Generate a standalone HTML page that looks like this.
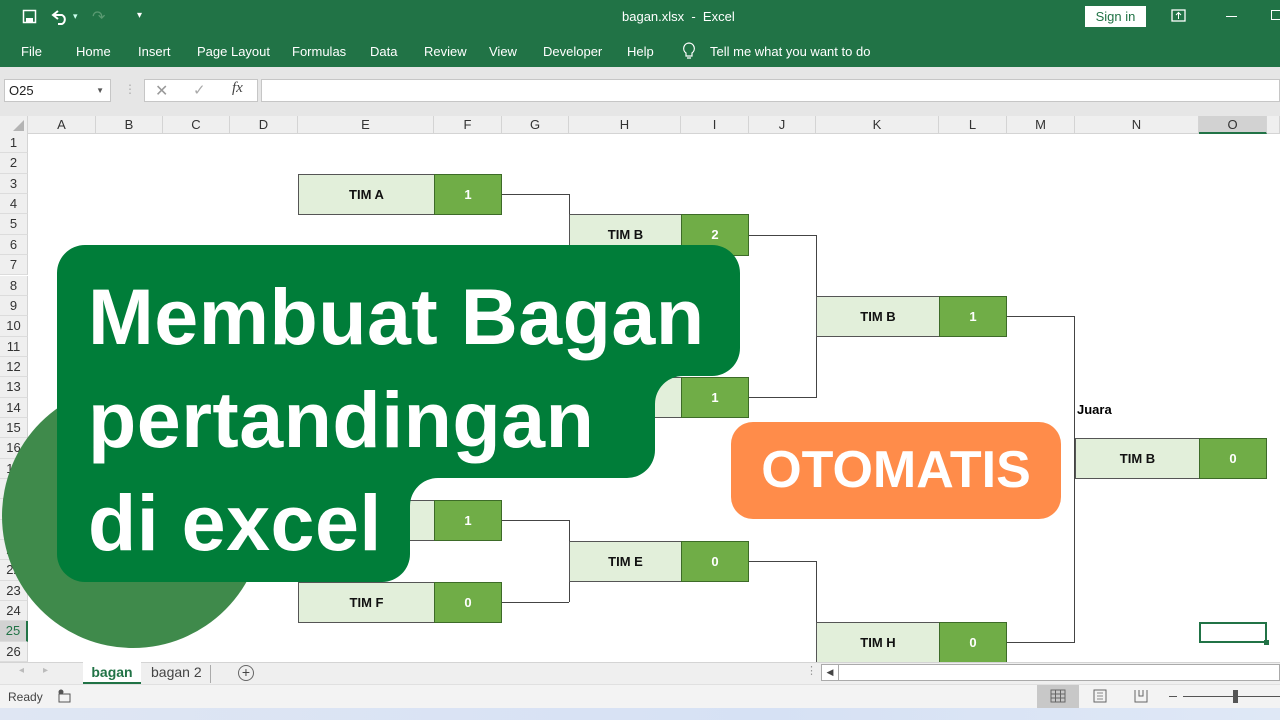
<!DOCTYPE html>
<html><head><meta charset="utf-8"><style>
*{margin:0;padding:0;box-sizing:border-box}
body{width:1280px;height:720px;overflow:hidden;background:#fff;font-family:"Liberation Sans",sans-serif;position:relative}
.a{position:absolute}
.top{left:0;top:0;width:1280px;height:67px;background:#217346;color:#fff}
.menu span{position:absolute;top:44px;font-size:13px}
.colh{top:116px;height:18px;background:#efefef;border-bottom:1px solid #d4d4d4;font-size:13px;color:#333;text-align:center;line-height:17px;border-right:1px solid #d4d4d4}
.rowh{left:0;width:28px;height:20.35px;background:#efefef;border-right:1px solid #d4d4d4;border-bottom:1px solid #dcdcdc;font-size:13px;color:#333;text-align:center;line-height:20px}
.n{background:#e2efda;border:1px solid #555;font-size:13px;font-weight:bold;text-align:center;color:#111}
.s{background:#70ad47;border:1px solid #3d6b28;font-size:13px;font-weight:bold;text-align:center;color:#fff}
.ln{background:#444}
</style></head><body>
<div class="a top">
 <svg class="a" style="left:22px;top:9px" width="16" height="16"><rect x="1.5" y="1.5" width="12" height="12" fill="none" stroke="#fff" stroke-width="1.5"/><rect x="4" y="9" width="7" height="4" fill="#fff"/></svg>
 <svg class="a" style="left:50px;top:8px" width="20" height="18"><path d="M4 7 H12 A5 5 0 0 1 12 16 H8" fill="none" stroke="#fff" stroke-width="2"/><path d="M8 3 L3 7 L8 11" fill="none" stroke="#fff" stroke-width="2"/></svg>
 <span class="a" style="left:73px;top:11px;font-size:9px;color:#cfe">▾</span>
 <span class="a" style="left:92px;top:7px;font-size:16px;color:#5a9a72">↷</span>
 <span class="a" style="left:137px;top:10px;font-size:10px">▾</span>
 <span class="a" style="left:622px;top:9px;font-size:13px">bagan.xlsx &nbsp;-&nbsp; Excel</span>
 <div class="a" style="left:1085px;top:6px;width:61px;height:21px;background:#fff;color:#217346;font-size:13px;text-align:center;line-height:21px">Sign in</div>
 <svg class="a" style="left:1171px;top:9px" width="16" height="14"><rect x="1" y="1" width="13" height="11" fill="none" stroke="#fff" stroke-width="1.3"/><path d="M7.5 10 V4 M5 6 L7.5 3.5 L10 6" stroke="#fff" fill="none"/></svg>
 <div class="a" style="left:1226px;top:16px;width:11px;height:1px;background:#fff"></div>
 <div class="a" style="left:1271px;top:10px;width:10px;height:10px;border:1px solid #fff"></div>
 <div class="menu">
 <span style="left:21px">File</span><span style="left:76px">Home</span><span style="left:138px">Insert</span><span style="left:197px">Page Layout</span><span style="left:292px">Formulas</span><span style="left:370px">Data</span><span style="left:424px">Review</span><span style="left:489px">View</span><span style="left:543px">Developer</span><span style="left:627px">Help</span><span style="left:710px">Tell me what you want to do</span>
 </div>
 <svg class="a" style="left:682px;top:42px" width="14" height="18"><path d="M7 1 A5.5 5.5 0 0 0 4 11 V14 H10 V11 A5.5 5.5 0 0 0 7 1 Z M5 16 H9" fill="none" stroke="#fff" stroke-width="1.2"/></svg>
</div>
<div class="a" style="left:0;top:67px;width:1280px;height:49px;background:#e6e6e6"></div>
<div class="a" style="left:4px;top:79px;width:107px;height:23px;background:#fff;border:1px solid #c6c6c6;font-size:13px;line-height:21px;padding-left:4px;color:#222">O25<span style="position:absolute;right:6px;font-size:8px;color:#555">▼</span></div>
<span class="a" style="left:124px;top:82px;color:#aaa;font-size:12px">⋮</span>
<div class="a" style="left:144px;top:79px;width:114px;height:23px;background:#fff;border:1px solid #c6c6c6"></div>
<span class="a" style="left:155px;top:81px;color:#999;font-size:16px">✕</span>
<span class="a" style="left:193px;top:81px;color:#aaa;font-size:15px">✓</span>
<span class="a" style="left:232px;top:80px;color:#444;font-size:15px;font-style:italic;font-family:'Liberation Serif',serif">fx</span>
<div class="a" style="left:261px;top:79px;width:1019px;height:23px;background:#fff;border:1px solid #c6c6c6"></div>

<div class="a" style="left:0;top:116px;width:28px;height:18px;background:#efefef;border-right:1px solid #d4d4d4;border-bottom:1px solid #d4d4d4"></div>
<svg class="a" style="left:12px;top:120px" width="13" height="12"><path d="M12 0 V11 H1 Z" fill="#b4b4b4"/></svg>
<div class="a colh" style="left:28px;width:68px">A</div><div class="a colh" style="left:96px;width:67px">B</div><div class="a colh" style="left:163px;width:67px">C</div><div class="a colh" style="left:230px;width:68px">D</div><div class="a colh" style="left:298px;width:136px">E</div><div class="a colh" style="left:434px;width:68px">F</div><div class="a colh" style="left:502px;width:67px">G</div><div class="a colh" style="left:569px;width:112px">H</div><div class="a colh" style="left:681px;width:68px">I</div><div class="a colh" style="left:749px;width:67px">J</div><div class="a colh" style="left:816px;width:123px">K</div><div class="a colh" style="left:939px;width:68px">L</div><div class="a colh" style="left:1007px;width:68px">M</div><div class="a colh" style="left:1075px;width:124px">N</div><div class="a colh" style="left:1199px;width:68px;background:#d2d2d2;border-bottom:2px solid #217346">O</div><div class="a colh" style="left:1267px;width:13px"></div>

<div class="a rowh" style="top:133.0px">1</div><div class="a rowh" style="top:153.4px">2</div><div class="a rowh" style="top:173.7px">3</div><div class="a rowh" style="top:194.1px">4</div><div class="a rowh" style="top:214.4px">5</div><div class="a rowh" style="top:234.8px">6</div><div class="a rowh" style="top:255.1px">7</div><div class="a rowh" style="top:275.5px">8</div><div class="a rowh" style="top:295.8px">9</div><div class="a rowh" style="top:316.2px">10</div><div class="a rowh" style="top:336.5px">11</div><div class="a rowh" style="top:356.9px">12</div><div class="a rowh" style="top:377.2px">13</div><div class="a rowh" style="top:397.6px">14</div><div class="a rowh" style="top:417.9px">15</div><div class="a rowh" style="top:438.3px">16</div><div class="a rowh" style="top:458.6px">17</div><div class="a rowh" style="top:479.0px">18</div><div class="a rowh" style="top:499.3px">19</div><div class="a rowh" style="top:519.7px">20</div><div class="a rowh" style="top:540.0px">21</div><div class="a rowh" style="top:560.4px">22</div><div class="a rowh" style="top:580.7px">23</div><div class="a rowh" style="top:601.1px">24</div><div class="a rowh" style="top:621.4px;background:#d2d2d2;color:#217346;border-right:2px solid #217346">25</div><div class="a rowh" style="top:641.8px">26</div>

<div class="a ln" style="left:502px;top:194px;width:67px;height:1px"></div><div class="a ln" style="left:569px;top:194px;width:1px;height:41px"></div>
<div class="a ln" style="left:749px;top:235px;width:67px;height:1px"></div><div class="a ln" style="left:816px;top:235px;width:1px;height:163px"></div>
<div class="a ln" style="left:749px;top:397px;width:67px;height:1px"></div>
<div class="a ln" style="left:1007px;top:316px;width:68px;height:1px"></div><div class="a ln" style="left:1074px;top:316px;width:1px;height:327px"></div>
<div class="a ln" style="left:1007px;top:642px;width:68px;height:1px"></div>
<div class="a ln" style="left:502px;top:520px;width:67px;height:1px"></div><div class="a ln" style="left:569px;top:520px;width:1px;height:82px"></div>
<div class="a ln" style="left:502px;top:602px;width:67px;height:1px"></div>
<div class="a ln" style="left:749px;top:561px;width:67px;height:1px"></div><div class="a ln" style="left:816px;top:561px;width:1px;height:82px"></div>

<div class="a n" style="left:298px;top:174px;width:137px;height:41px;line-height:39px">TIM A</div><div class="a s" style="left:434px;top:174px;width:68px;height:41px;line-height:39px">1</div>
<div class="a n" style="left:569px;top:214px;width:113px;height:42px;line-height:40px">TIM B</div><div class="a s" style="left:681px;top:214px;width:68px;height:42px;line-height:40px">2</div>
<div class="a n" style="left:816px;top:296px;width:124px;height:41px;line-height:39px">TIM B</div><div class="a s" style="left:939px;top:296px;width:68px;height:41px;line-height:39px">1</div>
<div class="a n" style="left:569px;top:377px;width:113px;height:41px"></div><div class="a s" style="left:681px;top:377px;width:68px;height:41px;line-height:39px">1</div>
<div class="a" style="left:1077px;top:402px;font-size:13px;font-weight:bold">Juara</div>
<div class="a n" style="left:1075px;top:438px;width:125px;height:41px;line-height:39px">TIM B</div><div class="a s" style="left:1199px;top:438px;width:68px;height:41px;line-height:39px">0</div>
<div class="a n" style="left:298px;top:500px;width:137px;height:41px"></div><div class="a s" style="left:434px;top:500px;width:68px;height:41px;line-height:39px">1</div>
<div class="a n" style="left:569px;top:541px;width:113px;height:41px;line-height:39px">TIM E</div><div class="a s" style="left:681px;top:541px;width:68px;height:41px;line-height:39px">0</div>
<div class="a n" style="left:298px;top:582px;width:137px;height:41px;line-height:39px">TIM F</div><div class="a s" style="left:434px;top:582px;width:68px;height:41px;line-height:39px">0</div>
<div class="a n" style="left:816px;top:622px;width:124px;height:42px;line-height:40px">TIM H</div><div class="a s" style="left:939px;top:622px;width:68px;height:42px;line-height:40px">0</div>
<div class="a" style="left:1199px;top:622px;width:68px;height:21px;border:2px solid #217346"></div>
<div class="a" style="left:1264px;top:640px;width:5px;height:5px;background:#217346"></div>

<div class="a" style="left:2px;top:384px;width:262px;height:264px;border-radius:50%;background:#3f8a4b"></div>
<svg class="a" style="left:0;top:0" width="1280" height="720"><path d="M85,245 H712 A28,28 0 0 1 740,273 V348 A28,28 0 0 1 712,376 H683 A28,28 0 0 0 655,404 V450 A28,28 0 0 1 627,478 H438 A28,28 0 0 0 410,506 V554 A28,28 0 0 1 382,582 H85 A28,28 0 0 1 57,554 V273 A28,28 0 0 1 85,245 Z" fill="#007d39"/></svg>
<div class="a" style="left:88px;top:265px;color:#fff;font-weight:bold;font-size:79px;line-height:103px;letter-spacing:0.5px">Membuat Bagan<br>pertandingan<br>di excel</div>
<div class="a" style="left:731px;top:422px;width:330px;height:97px;border-radius:22px;background:#ff8c4a;color:#fff;font-weight:bold;font-size:52px;text-align:center;line-height:97px">OTOMATIS</div>

<div class="a" style="left:0;top:662px;width:1280px;height:22px;background:#efefef;border-top:1px solid #d4d4d4"></div>
<span class="a" style="left:19px;top:665px;color:#bbb;font-size:10px">◂</span><span class="a" style="left:43px;top:665px;color:#bbb;font-size:10px">▸</span>
<div class="a" style="left:83px;top:662px;width:58px;height:22px;background:#fff;border-bottom:2px solid #217346;color:#217346;font-weight:bold;font-size:14px;text-align:center;line-height:20px">bagan</div>
<div class="a" style="left:151px;top:664px;font-size:14px;color:#444">bagan 2</div>
<div class="a" style="left:210px;top:665px;width:1px;height:18px;background:#aaa"></div>
<div class="a" style="left:238px;top:665px;width:16px;height:16px;border:1px solid #666;border-radius:50%;font-size:14px;line-height:13px;text-align:center;color:#444">+</div>
<span class="a" style="left:806px;top:664px;color:#999;font-size:11px">⋮</span>
<div class="a" style="left:821px;top:664px;width:459px;height:17px;background:#fff;border:1px solid #aaa"></div>
<div class="a" style="left:821px;top:664px;width:18px;height:17px;border:1px solid #aaa;font-size:9px;text-align:center;line-height:15px;color:#444">◀</div>
<div class="a" style="left:0;top:684px;width:1280px;height:24px;background:#f3f3f3;border-top:1px solid #e0e0e0"></div>
<span class="a" style="left:8px;top:690px;font-size:12px;color:#444">Ready</span>
<svg class="a" style="left:57px;top:689px" width="14" height="14"><circle cx="4" cy="3" r="2.5" fill="#555"/><rect x="2" y="5" width="11" height="8" fill="none" stroke="#555"/></svg>
<div class="a" style="left:1037px;top:685px;width:42px;height:23px;background:#c8c8c8"></div>
<svg class="a" style="left:1050px;top:689px" width="16" height="14"><path d="M1 1H15V13H1Z M1 5H15 M1 9H15 M5.5 1V13 M10.5 1V13" fill="none" stroke="#666"/></svg>
<svg class="a" style="left:1093px;top:689px" width="14" height="14"><rect x="1" y="1" width="12" height="12" fill="none" stroke="#666"/><path d="M4 4H10 M4 7H10 M4 10H10" stroke="#888"/></svg>
<svg class="a" style="left:1134px;top:689px" width="14" height="14"><path d="M1 1V13H13V1 M5 1V7H9V1" fill="none" stroke="#666"/></svg>
<div class="a" style="left:1169px;top:696px;width:8px;height:1px;background:#555"></div>
<div class="a" style="left:1183px;top:696px;width:97px;height:1px;background:#555"></div>
<div class="a" style="left:1233px;top:690px;width:5px;height:13px;background:#555"></div>
<div class="a" style="left:0;top:708px;width:1280px;height:12px;background:linear-gradient(90deg,#dfe6f3,#d6e1f4 60%,#dfe8f6)"></div>
</body></html>
